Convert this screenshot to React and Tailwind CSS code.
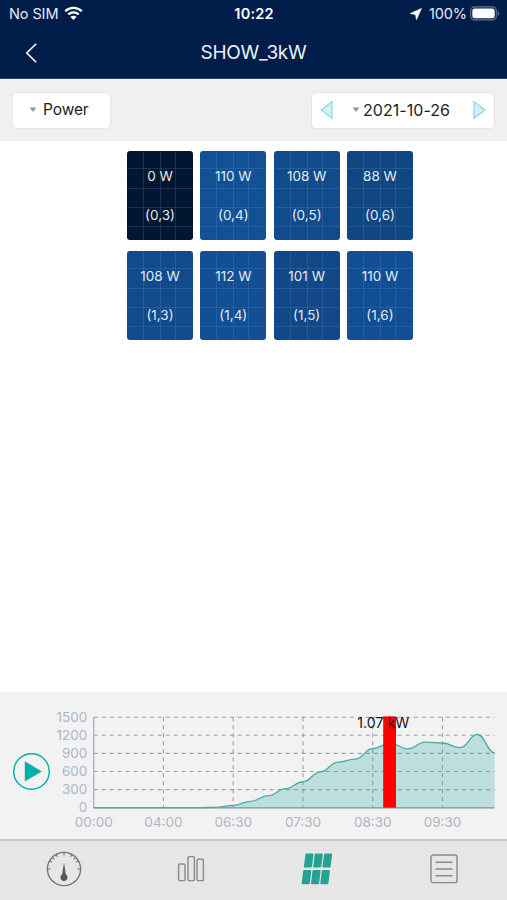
import React from 'react';

const PANELS = [
    { id: '(0,3)', power: 0, color: 'bg-[#021631]' },
    { id: '(0,4)', power: 110, color: 'bg-[#135196]' },
    { id: '(0,5)', power: 108, color: 'bg-[#114b8b]' },
    { id: '(0,6)', power: 88, color: 'bg-[#104783]' },
    { id: '(1,3)', power: 108, color: 'bg-[#114b8b]' },
    { id: '(1,4)', power: 112, color: 'bg-[#125093]' },
    { id: '(1,5)', power: 101, color: 'bg-[#114887]' },
    { id: '(1,6)', power: 110, color: 'bg-[#124e93]' },
];

// one sample per step, watts
const SAMPLES = [0, 0, 0, 0, 0, 0, 0, 6, 40, 105, 200, 315, 430, 595, 755, 805, 980, 1070, 975, 1088, 1072, 995, 1215, 910];
const TIMES = ['00:00', '04:00', '06:30', '07:30', '08:30', '09:30'];
const LEVELS = [0, 300, 600, 900, 1200, 1500];

const STEP = 17.44;
const LEFT = 93.7;
const RIGHT = 494.6;
const BASE = 115.7;
const toX = (i) => Math.min(LEFT + i * STEP, RIGHT);
const toY = (w) => BASE - (w / 1500) * 90.5;

const linePath = SAMPLES.map((w, i) => {
    if (i === 0) return `M${toX(0)} ${toY(w)}`;
    const bend = STEP * 0.43;
    return `C${toX(i - 1) + bend} ${toY(SAMPLES[i - 1])} ${toX(i) - bend} ${toY(w)} ${toX(i)} ${toY(w)}`;
}).join(' ');

const StatusBar = () => (
    <div className="h-[28px] grid grid-cols-3 items-center pl-[9px] pr-[6px] text-[14.5px] leading-none text-[#e6ebf4]">
        <div className="flex items-center gap-[6px]">
            <span className="tracking-[-0.1px]">No SIM</span>
            <svg width="19" height="15" viewBox="0 0 19 15" fill="none" stroke="#fff" strokeWidth="2.3" className="-mt-[2px]">
                <path d="M1.2 5.2a11.8 11.8 0 0 1 16.6 0" />
                <path d="M4.3 8.5a7.4 7.4 0 0 1 10.4 0" />
                <path d="M9.5 14.1 6.4 11a4.4 4.4 0 0 1 6.2 0z" fill="#fff" stroke="none" />
            </svg>
        </div>
        <span className="text-center font-semibold text-white text-[14.5px] tracking-[0.2px] -ml-[2px]">10:22</span>
        <div className="flex items-center justify-end">
            <svg width="12" height="12" viewBox="0 0 12 12" className="mr-[7px]">
                <path d="M11.4.5.4 5.5l5.1 1 1 5.1z" fill="#fff" stroke="#fff" strokeWidth=".7" strokeLinejoin="round" />
            </svg>
            <span className="mr-[3px] tracking-[-0.1px]">100%</span>
            <svg width="30" height="15" viewBox="0 0 30 15" className="-mt-[2px] mr-[1px]">
                <rect x=".7" y=".9" width="25.6" height="13" rx="3.8" fill="none" stroke="#66768f" strokeWidth="1.1" />
                <rect x="2.3" y="2.5" width="22.4" height="9.8" rx="2.4" fill="#fff" />
                <path d="M27.7 5.2c1.9.6 1.9 4 0 4.5z" fill="#66768f" />
            </svg>
        </div>
    </div>
);

const Header = () => (
    <header className="h-[79px] bg-[#001d4a] border-b border-[#29416a]">
        <StatusBar />
        <div className="h-[49px] grid grid-cols-[80px_1fr_80px] items-center">
            <svg width="13" height="22" viewBox="0 0 13 22" fill="none" stroke="#fff" strokeWidth="1.6" className="ml-[25px]">
                <path d="M11.2 1.8 1.8 11l9.4 9.2" />
            </svg>
            <h1 className="text-center text-[19px] leading-none text-[#eaf0f8] tracking-[-0.3px]">SHOW_3kW</h1>
        </div>
    </header>
);

const Caret = () => (
    <svg width="8" height="6" viewBox="0 0 8 6">
        <path d="M.6.5h6.8L4 5z" fill="#969696" />
    </svg>
);

const Toolbar = () => (
    <div className="h-[62px] bg-[#f0f0f0] flex items-center justify-between px-[12px] text-[16px] text-[#222]">
        <button className="w-[99px] h-[37px] flex items-center bg-white border border-[#e6e6e6] rounded-[5px] pl-[16px] gap-[6px]">
            <Caret />
            <span className="text-[15.5px] tracking-[-0.1px]">Power</span>
        </button>
        <div className="w-[184px] h-[37px] flex items-center bg-white border border-[#e4e4e4] rounded-[5px] pl-[8px] pr-[8px]">
            <svg width="13" height="20" viewBox="0 0 13 20">
                <path d="M12 1.6v16.8L1.2 10z" fill="#d3eff5" stroke="#78d9e5" strokeWidth="1.1" />
            </svg>
            <span className="flex items-center gap-[3px] ml-[19px] tracking-[0.05px]">
                <Caret />
                2021-10-26
            </span>
            <svg width="13" height="20" viewBox="0 0 13 20" className="ml-auto">
                <path d="M1 1.6v16.8L11.8 10z" fill="#d3eff5" stroke="#78d9e5" strokeWidth="1.1" />
            </svg>
        </div>
    </div>
);

const Panel = ({ panel }) => (
    <div className={`relative h-[89px] rounded-[3px] overflow-hidden text-[13.5px] leading-none text-[#e1eaf4] ${panel.color}`}>
        <svg className="absolute inset-0" width="66" height="89" viewBox="0 0 66 89" fill="none" stroke="#7eb3df" strokeOpacity=".17">
            <path d="M16.5 0v89M33.5 0v89M48.5 0v89M0 17.5h66M0 37.5h66M0 56.5h66M0 75.5h66" />
        </svg>
        <div className="relative h-full flex flex-col items-center pt-[19px] gap-[26px]">
            <span>{panel.power} W</span>
            <span>{panel.id}</span>
        </div>
    </div>
);

const Chart = () => (
    <svg width="507" height="147" viewBox="0 0 507 147" className="block">
        <g fill="none" stroke="#00b1a7">
            <circle cx="31.5" cy="79.5" r="17.8" strokeWidth="1.4" />
            <path d="M24.8 69.2v20.4l17-10.2z" fill="#00b1a7" stroke="none" />
        </g>
        <g fill="#b0b5c5" fontSize="13.5">
            {LEVELS.map((v) => (
                <text key={v} x="87.3" y={toY(v) + 4.3} textAnchor="end">{v}</text>
            ))}
            {TIMES.map((t, i) => (
                <text key={t} x={toX(i * 4)} y="134.8" textAnchor="middle">{t}</text>
            ))}
        </g>
        <path d={`${linePath} V${BASE} H${LEFT}z`} fill="#4eb7b2" fillOpacity=".33" />
        <g stroke="#697b80" strokeOpacity=".65" strokeWidth="1.1" strokeDasharray="4 4">
            {LEVELS.slice(1).map((v) => (
                <path key={v} d={`M${LEFT} ${toY(v)}H${RIGHT}`} />
            ))}
            {TIMES.slice(1).map((t, i) => (
                <path key={t} d={`M${toX((i + 1) * 4)} 25.2V${BASE}`} />
            ))}
        </g>
        <path d={`M${LEFT} 25V${BASE}`} stroke="#a6acba" strokeWidth="1.2" />
        <path d={`M${LEFT} ${BASE + 0.2}H${RIGHT}`} stroke="#729596" strokeWidth="1.4" />
        <path d={linePath} fill="none" stroke="#48aaa4" strokeWidth="1.3" />
        <rect x="383.2" y="24.4" width="12.8" height="91.2" fill="#fe0000" />
        <text x="383.3" y="36" textAnchor="middle" fontSize="14.2" fill="#161616">1.07 kW</text>
    </svg>
);

const GaugeIcon = () => (
    <svg width="36" height="36" viewBox="0 0 36 36" fill="none" stroke="#737373" className="ml-[2px]">
        <circle cx="18" cy="18" r="16.6" strokeWidth="1.3" />
        <g strokeWidth="1.1">
            {[-90, -60, -45, -28, 0, 28, 45, 60, 90].map((deg) => (
                <path key={deg} d="M18 1.8v2.6" transform={`rotate(${deg} 18 18)`} />
            ))}
        </g>
        <path d="M18 11.6 19.8 23.2a3.6 3.6 0 1 1-3.6 0z" fill="#575757" stroke="none" />
    </svg>
);

const BarsIcon = () => (
    <svg width="28" height="28" viewBox="0 0 28 28" fill="none" stroke="#8a8a8a" strokeWidth="1.4" className="ml-[1px]">
        <rect x="1.6" y="9" width="6.4" height="16.6" rx="1.2" />
        <rect x="11" y="1.6" width="6.4" height="24" rx="1.2" />
        <rect x="20" y="4.2" width="6.4" height="21.4" rx="1.2" />
    </svg>
);

const LayoutIcon = () => (
    <svg width="32" height="32" viewBox="0 0 32 32" fill="#26a294" stroke="#26a294" strokeWidth="2.4" strokeLinejoin="round" className="ml-[1px]">
        {[0, 9.3, 18.6].map((x) => (
            <g key={x} transform={`translate(${x} 0)`}>
                <path d="M5.6 1.8h5.7l-1.5 11.6H4.1z" />
                <path d="M3.4 18.1h5.7L7.6 30H1.9z" />
            </g>
        ))}
    </svg>
);

const ListIcon = () => (
    <svg width="28" height="30" viewBox="0 0 28 30" fill="none" stroke="#888" strokeWidth="1.4">
        <rect x="1" y="1" width="26" height="27.6" rx="2.2" />
        <path d="M5.5 8.2h17M5.5 15h17M5.5 21.8h17" />
    </svg>
);

const TabBar = () => (
    <nav className="h-[61px] bg-[#e6e6e6] border-t-2 border-[#c6c6c6] pb-[3px] grid grid-cols-4 items-center justify-items-center">
        <GaugeIcon />
        <BarsIcon />
        <LayoutIcon />
        <ListIcon />
    </nav>
);

const App = () => (
    <div className="w-[507px] h-[900px] flex flex-col overflow-hidden bg-white font-['Inter',sans-serif]">
        <Header />
        <Toolbar />

        <main className="flex-1 pt-[9.5px] pl-[127px]">
            <div className="w-[286px] grid grid-cols-[repeat(4,66px)] justify-between gap-y-[11px]">
                {PANELS.map((panel) => <Panel key={panel.id} panel={panel} />)}
            </div>
        </main>

        <section className="h-[147px] bg-[#f2f2f2]">
            <Chart />
        </section>
        <TabBar />
    </div>
);

export default App;
